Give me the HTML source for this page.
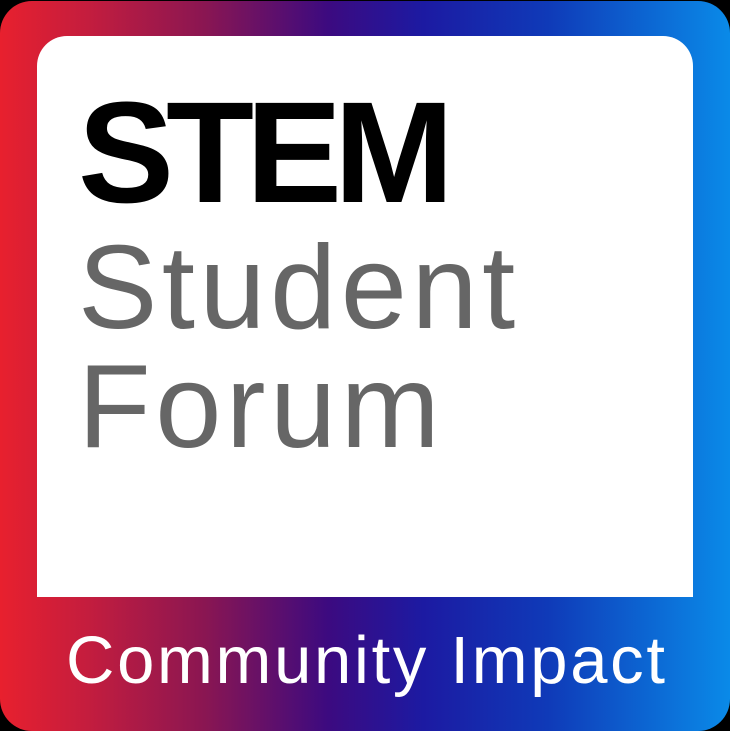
<!DOCTYPE html>
<html><head><style>
html,body{margin:0;padding:0;background:#000;width:730px;height:731px;overflow:hidden}
.box{position:absolute;left:0;top:1px;width:730px;height:730px;border-radius:32px;
background:linear-gradient(90deg,#e8202e 0%,#c41d3e 12%,#8a1652 28%,#3c0a80 45%,#1c1aa2 58%,#0f3ab8 75%,#0a8ae8 100%)}
.inner{position:absolute;left:37px;top:36px;width:656px;height:561px;background:#fff;border-radius:30px 30px 0 0}
svg{position:absolute;left:0;top:0}
</style></head><body>
<div class="box"></div>
<div class="inner"></div>
<svg width="730" height="731">
<text x="78" y="202" font-family="Liberation Sans, sans-serif" font-weight="bold" font-size="144" letter-spacing="-8" fill="#000">STEM</text>
<text x="78" y="328" font-family="Liberation Sans, sans-serif" font-size="119" letter-spacing="4.5" fill="#666">Student</text>
<text x="78" y="447" font-family="Liberation Sans, sans-serif" font-size="119" letter-spacing="4.5" fill="#666">Forum</text>
<text x="66" y="683" font-family="Liberation Sans, sans-serif" font-size="67" letter-spacing="2.7" fill="#fff">Community Impact</text>
</svg>
</body></html>
